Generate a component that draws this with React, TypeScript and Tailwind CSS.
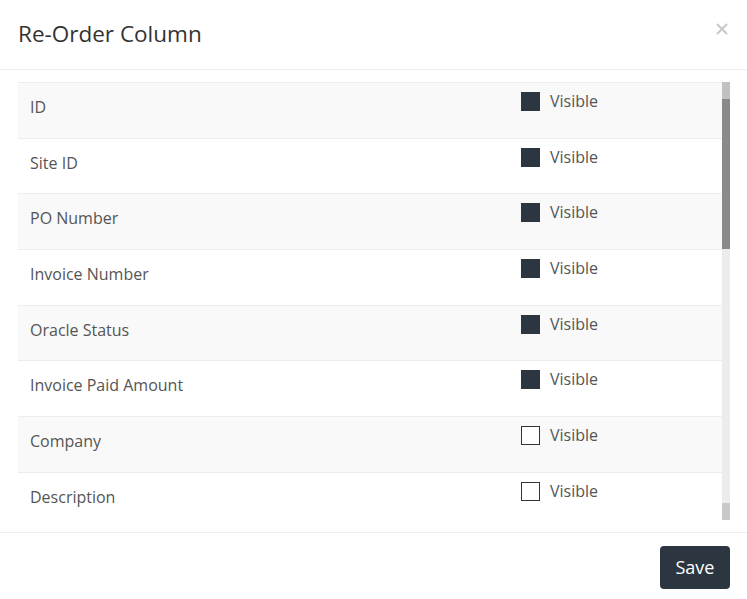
import { X } from 'lucide-react';

const columns = [
  { name: 'ID', visible: true },
  { name: 'Site ID', visible: true },
  { name: 'PO Number', visible: true },
  { name: 'Invoice Number', visible: true },
  { name: 'Oracle Status', visible: true },
  { name: 'Invoice Paid Amount', visible: true },
  { name: 'Company', visible: false },
  { name: 'Description', visible: false },
];

function Row({ name, visible, striped }: { name: string; visible: boolean; striped: boolean }) {
  return (
    <div
      className={`flex h-[55.7px] shrink-0 border-t border-[#ededed] ${striped ? 'bg-[#f9f9f9]' : 'bg-white'}`}
    >
      <div className="flex-1 pl-3 pt-3 text-[16px] leading-6 text-[#555]">{name}</div>
      <div className="w-[201px] pt-[8px] flex items-start">
        <span
          className={`mt-[1px] w-[19px] h-[19px] ${visible ? 'bg-[#2b3640]' : 'bg-white border border-[#333]'}`}
        />
        <span className="ml-[10px] text-[16px] leading-5 text-[#555]">Visible</span>
      </div>
    </div>
  );
}

export default function App() {
  return (
    <div className="w-[747px] h-[599px] bg-white overflow-hidden" style={{ fontFamily: '"Open Sans", sans-serif' }}>
      {/* Header */}
      <div className="h-[70px] flex items-center justify-between pl-[18px] pr-[16px] border-b border-[#eeeeee]">
        <h4 className="text-[22.5px] text-[#333] pb-[2px]">Re-Order Column</h4>
        <button className="text-[#c8c8c8] -mt-[12px]">
          <X size={18} strokeWidth={2.6} />
        </button>
      </div>

      {/* Body */}
      <div className="pt-3 pl-[18px] pr-[17px] flex h-[450px]">
        <div className="flex-1 h-[438px] overflow-hidden flex flex-col">
          {columns.map((c, i) => (
            <Row key={c.name} name={c.name} visible={c.visible} striped={i % 2 === 0} />
          ))}
        </div>
        {/* scrollbar */}
        <div className="w-2 h-[438px] flex flex-col bg-[#ececec]">
          <div className="h-[17px] bg-[#c1c1c1]" />
          <div className="h-[150px] bg-[#8a8a8a]" />
          <div className="flex-1" />
          <div className="h-[17px] bg-[#c8c8c8]" />
        </div>
      </div>

      {/* Footer */}
      <div className="border-t border-[#eeeeee] mt-[12px] flex justify-end pt-[13px] pr-[17px]">
        <button className="w-[70px] h-[43px] rounded bg-[#2b3640] text-white text-[18px]">Save</button>
      </div>
    </div>
  );
}
